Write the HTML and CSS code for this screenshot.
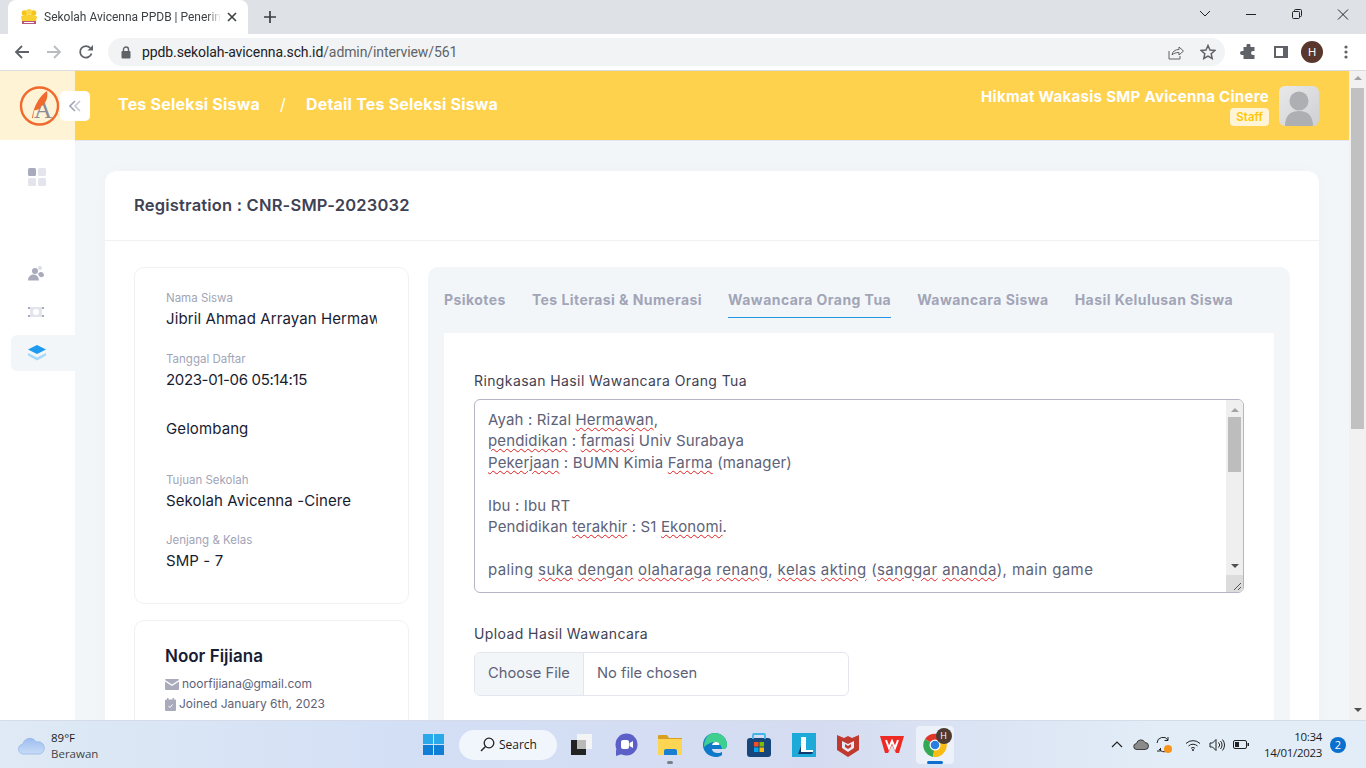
FILE: index.html
```html
<!DOCTYPE html>
<html lang="en">
<head>
  <meta charset="UTF-8">
  <title>Sekolah Avicenna PPDB</title>
  <link rel="stylesheet" href="styles.css">
</head>
<body>
  <!-- browser chrome -->
  <div class="tabstrip">
    <div class="tab">
      <svg class="favicon" width="18" height="18" viewBox="0 0 18 18"><circle cx="4.500" cy="5" r="2.800" fill="#f5c518"/><circle cx="13.500" cy="5" r="2.800" fill="#f5c518"/><circle cx="9" cy="4" r="3" fill="#fbd84a"/><path d="M1 9c1-2 5-2 8-2s7 0 8 2l-1 4H2z" fill="#f8d030"/><path d="M2 13h14v3H2z" fill="#b9557a"/><path d="M4 14h10v1H4z" fill="#fff"/></svg>
      <span class="tab-title">Sekolah Avicenna PPDB | Penerimaan Siswa</span>
      <svg class="tab-close" width="10" height="10" viewBox="0 0 10 10"><path d="M1 1l8 8M9 1l-8 8" stroke="#3c4043" stroke-width="1.600"/></svg>
    </div>
    <svg class="new-tab" width="14" height="14" viewBox="0 0 14 14"><path d="M7 1v12M1 7h12" stroke="#3c4043" stroke-width="1.700"/></svg>
    <div class="win-controls">
      <svg width="46" height="28" viewBox="0 0 46 28"><path d="M18 11l5 5 5-5" fill="none" stroke="#222" stroke-width="1"/></svg>
      <svg width="46" height="28" viewBox="0 0 46 28"><path d="M18 14.500h10" stroke="#222" stroke-width="1"/></svg>
      <svg width="46" height="28" viewBox="0 0 46 28"><path d="M20 11.500h-.5a1 1 0 0 0-1 1v5a1 1 0 0 0 1 1h5a1 1 0 0 0 1-1v-5a1 1 0 0 0-1-1H20zM20.500 11v-.5a1 1 0 0 1 1-1h5a1 1 0 0 1 1 1v5a1 1 0 0 1-1 1H26" fill="none" stroke="#222" stroke-width="1"/></svg>
      <svg width="46" height="28" viewBox="0 0 46 28"><path d="M18 9.500l10 10M28 9.500l-10 10" stroke="#222" stroke-width="1"/></svg>
    </div>
  </div>
  <div class="toolbar">
    <svg class="tool" width="16" height="16" viewBox="0 0 16 16"><path d="M15 8H2M8 2L2 8l6 6" fill="none" stroke="#5f6368" stroke-width="1.800"/></svg>
    <svg class="tool" width="16" height="16" viewBox="0 0 16 16"><path d="M1 8h13M8 2l6 6-6 6" fill="none" stroke="#babcbe" stroke-width="1.800"/></svg>
    <svg class="tool" width="16" height="16" viewBox="0 0 16 16"><path d="M13.500 9.500A5.800 5.800 0 1 1 12.300 4" fill="none" stroke="#5f6368" stroke-width="1.800"/><path d="M9.500 6.500H15V1z" fill="#5f6368"/></svg>
    <div class="omnibox">
      <svg width="10" height="13" viewBox="0 0 10 13"><path d="M2.500 5V3.500a2.500 2.500 0 0 1 5 0V5" fill="none" stroke="#5f6368" stroke-width="1.400"/><rect x="0.500" y="5" width="9" height="7.500" rx="1" fill="#5f6368"/></svg>
      <span class="url">ppdb.sekolah-avicenna.sch.id<span class="url-path">/admin/interview/561</span></span>
      <svg class="omni-share" width="16" height="16" viewBox="0 0 16 16"><path d="M1 7v8h11v-3" fill="none" stroke="#5f6368"/><path d="M4 11c.500-3.500 3-5.500 7-5.500V3l4.500 4-4.500 4V8.500c-3 0-5.500.800-7 2.500z" fill="none" stroke="#5f6368"/></svg>
      <svg class="omni-star" width="16" height="16" viewBox="0 0 16 16"><path d="M8 1.500l2 4.500 4.800.500-3.600 3.200 1 4.800L8 12.100l-4.200 2.400 1-4.800L1.200 6.500 6 6z" fill="none" stroke="#5f6368" stroke-width="1.500"/></svg>
    </div>
    <svg class="tool-puzzle" width="16" height="16" viewBox="0 0 16 16"><path d="M6 1.500a2 2 0 0 1 4 0V3h4v4h-1.500a2 2 0 0 0 0 4H14v4H3v-4H1.500a2 2 0 0 1 0-4H3V3h3z" fill="#5f6368" transform="translate(.5 0)"/></svg>
    <svg class="tool-panel" width="14" height="12" viewBox="0 0 14 12"><path d="M0 0h14v12H0zM2 2v8h7V2z" fill="#5f6368" fill-rule="evenodd"/></svg>
    <div class="profile">H</div>
    <svg class="tool-dots" width="4" height="14" viewBox="0 0 4 14"><circle cx="2" cy="2" r="1.600" fill="#5f6368"/><circle cx="2" cy="7" r="1.600" fill="#5f6368"/><circle cx="2" cy="12" r="1.600" fill="#5f6368"/></svg>
  </div>

  <!-- page -->
  <div class="viewport">
    <div class="app">
      <header class="topbar">
        <div class="brand">
          <svg width="42" height="42" viewBox="0 0 42 42">
            <circle cx="20.500" cy="21" r="18.500" fill="none" stroke="#ef6a2c" stroke-width="2.400"/>
            <text x="24" y="33" class="logo-a">A</text>
            <path d="M13 33C14 24 19 12 28 6c1.500 7-1.500 12-5 15l-2 .5 1 1c-2 1.500-3.500 2.500-7 3L14 33z" fill="#ef6a2c"/>
          </svg>
          <button class="collapse">
            <svg width="12" height="12" viewBox="0 0 12 12"><path d="M6 1L1 6l5 5" fill="none" stroke="#a1a5b7" stroke-width="1.600"/><path d="M11 1L6 6l5 5" fill="none" stroke="#c4c6d2" stroke-width="1.600"/></svg>
          </button>
        </div>
        <div class="crumbs">
          <span>Tes Seleksi Siswa</span>
          <span class="crumb-sep">/</span>
          <span>Detail Tes Seleksi Siswa</span>
        </div>
        <div class="user">
          <div class="user-name">Hikmat Wakasis SMP Avicenna Cinere</div>
          <div class="user-role">Staff</div>
        </div>
        <div class="avatar">
          <svg width="40" height="40" viewBox="0 0 40 40"><circle cx="20" cy="15" r="9.500" fill="#aeafb3"/><path d="M6 40c0-10 5-15 14-15s14 5 14 15z" fill="#aeafb3"/></svg>
        </div>
      </header>
      <div class="layout">
        <nav class="sidebar">
          <div class="nav-item nav-first">
            <svg width="18" height="18" viewBox="0 0 18 18"><rect width="8" height="8" rx="1.500" fill="#a9abbd"/><rect x="10" width="8" height="8" rx="1.500" fill="#e4e5ec"/><rect y="10" width="8" height="8" rx="1.500" fill="#e4e5ec"/><rect x="10" y="10" width="8" height="8" rx="1.500" fill="#e4e5ec"/></svg>
          </div>
          <div class="nav-item nav-users">
            <svg width="16" height="15" viewBox="0 0 16 15"><circle cx="7" cy="5" r="3" fill="#a9abbd"/><circle cx="12" cy="2" r="2" fill="#dcdde6"/><path d="M0 14.500c0-3.500 2.500-6 5.500-6 2.500 0 4 1.500 5 3.500l.5 2.500z" fill="#a9abbd"/><path d="M10 8c.8-1.500 2-2 3-2 1.500 0 3 1.500 3 3.500-1 2-3.500 2-4.500 1z" fill="#a9abbd"/></svg>
          </div>
          <div class="nav-item">
            <svg width="16" height="12" viewBox="0 0 16 12"><rect x="2" y="1" width="12" height="10" fill="#e4e5ec"/><circle cx="8" cy="6" r="3" fill="#fff"/><path d="M0 1h2v2H0zM14 1h2v2h-2zM0 9h2v2H0zM14 9h2v2h-2z" fill="#a9abbd"/></svg>
          </div>
          <div class="nav-item nav-active">
            <svg width="18" height="16" viewBox="0 0 18 16"><path d="M9 0l9 4.500L9 9 0 4.500z" fill="#1c9bf0"/><path d="M0 8l9 4.500L18 8v2.500L9 15.500 0 10.500z" fill="#a5d8fa"/></svg>
          </div>
        </nav>
        <main class="content">
          <section class="card">
            <div class="card-head">Registration : CNR-SMP-2023032</div>
            <div class="card-body">
              <aside class="side-col">
                <div class="info-card">
                  <div class="field"><div class="field-label">Nama Siswa</div><div class="field-value">Jibril Ahmad Arrayan Hermawan</div></div>
                  <div class="field"><div class="field-label">Tanggal Daftar</div><div class="field-value field-date">2023-01-06 05:14:15</div></div>
                  <div class="field field-plain"><div class="field-value">Gelombang</div></div>
                  <div class="field"><div class="field-label">Tujuan Sekolah</div><div class="field-value">Sekolah Avicenna -Cinere</div></div>
                  <div class="field"><div class="field-label">Jenjang &amp; Kelas</div><div class="field-value">SMP - 7</div></div>
                </div>
                <div class="parent-card">
                  <div class="parent-name">Noor Fijiana</div>
                  <div class="parent-line">
                    <svg width="14" height="11" viewBox="0 0 14 11"><path d="M0 1a1 1 0 0 1 1-1h12a1 1 0 0 1 1 1L7 5.500z" fill="#a9abbd"/><path d="M0 2.500l7 4.500 7-4.500V10a1 1 0 0 1-1 1H1a1 1 0 0 1-1-1z" fill="#a9abbd"/></svg>
                    noorfijiana@gmail.com
                  </div>
                  <div class="parent-line">
                    <svg width="11" height="13" viewBox="0 0 11 13"><path d="M1 1.500h9a1 1 0 0 1 1 1V12a1 1 0 0 1-1 1H1a1 1 0 0 1-1-1V2.500a1 1 0 0 1 1-1z" fill="#a9abbd"/><path d="M2 0h1.500v2.500H2zM7.500 0H9v2.500H7.500z" fill="#a9abbd"/><path d="M3.500 8l1.500 1.500 2.500-3" fill="none" stroke="#fff"/></svg>
                    Joined January 6th, 2023
                  </div>
                </div>
              </aside>
              <div class="tab-panel">
                <div class="tabs">
                  <span class="tab-link">Psikotes</span>
                  <span class="tab-link">Tes Literasi &amp; Numerasi</span>
                  <span class="tab-link tab-link-active">Wawancara Orang Tua</span>
                  <span class="tab-link">Wawancara Siswa</span>
                  <span class="tab-link">Hasil Kelulusan Siswa</span>
                </div>
                <div class="tab-body">
                  <label class="form-label">Ringkasan Hasil Wawancara Orang Tua</label>
                  <div class="textbox">
                    <div class="textbox-text">
                      <div>Ayah : Rizal <u>Hermawan</u>,</div>
                      <div><u>pendidikan</u> : <u>farmasi</u> Univ Surabaya</div>
                      <div><u>Pekerjaan</u> : BUMN Kimia <u>Farma</u> (manager)</div>
                      <div>&nbsp;</div>
                      <div>Ibu : Ibu RT</div>
                      <div>Pendidikan <u>terakhir</u> : S1 <u>Ekonomi</u>.</div>
                      <div>&nbsp;</div>
                      <div class="text-long">paling <u>suka</u> <u>dengan</u> <u>olaharaga</u> <u>renang</u>, <u>kelas</u> <u>akting</u> (<u>sanggar</u> <u>ananda</u>), main game</div>
                    </div>
                    <div class="mini-scroll">
                      <span class="arrow-up"></span>
                      <span class="mini-thumb"></span>
                      <span class="arrow-down"></span>
                      <span class="mini-corner">
                        <svg width="17" height="17" viewBox="0 0 17 17"><path d="M8 15l7-7M12 15l3-3" stroke="#555" stroke-width="1"/></svg>
                      </span>
                    </div>
                  </div>
                  <label class="form-label upload-label">Upload Hasil Wawancara</label>
                  <div class="file-input">
                    <span class="file-btn">Choose File</span>
                    <span class="file-name">No file chosen</span>
                  </div>
                </div>
              </div>
            </div>
          </section>
        </main>
      </div>
    </div>
    <div class="page-scroll">
      <span class="arrow-up"></span>
      <span class="page-thumb"></span>
      <span class="arrow-down"></span>
    </div>
  </div>

  <!-- windows taskbar -->
  <footer class="taskbar">
    <div class="weather">
      <svg width="28" height="20" viewBox="0 0 28 20"><defs><linearGradient id="cloudFill" x1="0" y1="0" x2="0" y2="1"><stop offset="0" stop-color="#9dbdf0"/><stop offset="1" stop-color="#c9dcf7"/></linearGradient></defs><path d="M6 19a5 5 0 0 1-1-10 7 7 0 0 1 13-2 6 6 0 0 1 4 12z" fill="url(#cloudFill)" stroke="#8fb2ea" stroke-width=".7"/></svg>
      <div class="weather-text">
        <div class="temp">89°F</div>
        <div class="cond">Berawan</div>
      </div>
    </div>
    <div class="task-icons">
      <div class="task-icon">
        <svg width="21" height="21" viewBox="0 0 21 21"><rect width="10" height="10" fill="#29a8ea"/><rect x="11" width="10" height="10" fill="#29a8ea"/><rect y="11" width="10" height="10" fill="#0f7fd6"/><rect x="11" y="11" width="10" height="10" fill="#0f7fd6"/></svg>
      </div>
      <div class="search-pill">
        <svg width="15" height="15" viewBox="0 0 15 15"><circle cx="9" cy="6" r="4.800" fill="none" stroke="#222" stroke-width="1.300"/><path d="M5.500 9.500L1 14" stroke="#222" stroke-width="1.500"/></svg>
        Search
      </div>
      <div class="task-icon">
        <svg width="22" height="22" viewBox="0 0 22 22"><rect x="0" y="6" width="15" height="15" fill="#222"/><rect x="6" y="0" width="15" height="15" fill="#f4f4f4"/><rect x="6" y="6" width="9" height="9" fill="#b9b9b9"/></svg>
      </div>
      <div class="task-icon">
        <svg width="24" height="24" viewBox="0 0 24 24"><circle cx="12.500" cy="11.500" r="11" fill="#5b5fc7"/><path d="M2 16v7l6-2z" fill="#5b5fc7"/><rect x="7" y="7" width="8" height="9" rx="2" fill="#fff"/><path d="M15.500 10l3.500-2v7l-3.500-2z" fill="#fff"/></svg>
      </div>
      <div class="task-icon task-running">
        <svg width="24" height="22" viewBox="0 0 24 22"><path d="M0 2a1 1 0 0 1 1-1h8l2 3h13v4H0z" fill="#d9a11f"/><path d="M0 5h24v16H0z" fill="#fcd653"/><path d="M8 15h9a2 2 0 0 1 2 2v4H6v-4a2 2 0 0 1 2-2z" fill="#1a7fd0"/></svg>
      </div>
      <div class="task-icon">
        <svg width="24" height="24" viewBox="0 0 24 24"><path d="M12 0a12 12 0 0 1 12 12c0 3-2 4-5 4H9c.5 3 3 4 6 4 2 0 3-.5 4-1v3c-2 1.500-4 2-6 2C6 24 0 19 0 12 0 5 5 0 12 0z" fill="#0f79c9"/><path d="M12 0a12 12 0 0 1 12 12c0 3-2 4-5 4-1-4-3-7-7-7-4 0-8 2-11 5C1 6 5 0 12 0z" fill="#3fcf8e"/><path d="M9 12c.5-2 2-3 4-3 2 0 3.500 1 3.500 3z" fill="#fff"/></svg>
      </div>
      <div class="task-icon">
        <svg width="24" height="24" viewBox="0 0 24 24"><rect y="5" width="24" height="19" rx="3" fill="#16467c"/><path d="M6 6V2a1 1 0 0 1 1-1h10a1 1 0 0 1 1 1v4" fill="none" stroke="#3fb6e8" stroke-width="1.800"/><rect x="7" y="9" width="4.500" height="4.500" fill="#f25022"/><rect x="12.500" y="9" width="4.500" height="4.500" fill="#7fba00"/><rect x="7" y="14.500" width="4.500" height="4.500" fill="#00a4ef"/><rect x="12.500" y="14.500" width="4.500" height="4.500" fill="#ffb900"/></svg>
      </div>
      <div class="task-icon">
        <svg width="24" height="24" viewBox="0 0 24 24"><rect width="24" height="24" fill="#1eaad8"/><path d="M6 21l3-2V4h5v13h7v2z" fill="#fff"/><path d="M6 21l3-8v6h12l-1 2z" fill="#12396e"/></svg>
      </div>
      <div class="task-icon">
        <svg width="22" height="24" viewBox="0 0 22 24"><path d="M0 2l7 3 4-2 4 2 7-3v15l-11 7L0 17z" fill="#c0392f"/><path d="M5 8l6 3 6-3v7l-6 4-6-4z" fill="#e7eaf4"/><path d="M8 11l3 2 3-2v3l-3 2-3-2z" fill="#c0392f"/></svg>
      </div>
      <div class="task-icon">
        <svg width="24" height="18" viewBox="0 0 24 18"><path d="M0 0h24l-5 17h-3l-4-8-4 8H5z" fill="#ee2a24"/><path d="M6 4l3 8 3-7 3 7 3-8" fill="none" stroke="#fff" stroke-width="2"/></svg>
      </div>
      <div class="task-icon task-chrome">
        <svg width="24" height="24" viewBox="0 0 24 24"><path d="M12 12L2 6a12 12 0 0 1 20 0z" fill="#e0352b"/><path d="M12 12L2 6a12 12 0 0 0 8 18z" fill="#34a853"/><path d="M12 12l10-6a12 12 0 0 1-12 18z" fill="#f9bc15"/><circle cx="12" cy="12" r="5.500" fill="#fff"/><circle cx="12" cy="12" r="4.300" fill="#2a7de1"/></svg>
        <span class="chrome-badge">H</span>
      </div>
    </div>
    <div class="tray">
      <svg class="tray-chevron" width="12" height="7" viewBox="0 0 12 7"><path d="M1 6l5-5 5 5" fill="none" stroke="#222" stroke-width="1.200"/></svg>
      <svg width="16" height="11" viewBox="0 0 16 11"><path d="M4 10.500a3 3 0 0 1-.5-6 4.500 4.500 0 0 1 8.500-1 3.500 3.500 0 0 1 0 7z" fill="#8a8a8a" stroke="#222" stroke-width=".8"/></svg>
      <svg class="tray-sync" width="18" height="18" viewBox="0 0 18 18"><path d="M1 7a6 6 0 0 1 11-3" fill="none" stroke="#222"/><path d="M12 1v3.500H8.500" fill="none" stroke="#222"/><path d="M11 15a6 6 0 0 1-8-2" fill="none" stroke="#222"/><path d="M1 15h3.500v-3" fill="none" stroke="#222"/><circle cx="12" cy="13" r="4" fill="#f7931a"/></svg>
      <svg class="tray-wifi" width="16" height="12" viewBox="0 0 16 12"><path d="M1 4.500a10 10 0 0 1 14 0M3.500 7a6.500 6.500 0 0 1 9 0M6 9.300a3 3 0 0 1 4 0" fill="none" stroke="#222" stroke-width="1"/><circle cx="8" cy="11" r="1" fill="#222"/></svg>
      <svg width="16" height="14" viewBox="0 0 16 14"><path d="M1 5h2.500L7 1.500v11L3.500 9H1z" fill="none" stroke="#222"/><path d="M9.500 4.500a3.500 3.500 0 0 1 0 5M11.500 3a6 6 0 0 1 0 8M13.500 1.500a8.500 8.500 0 0 1 0 11" fill="none" stroke="#222"/></svg>
      <svg width="16" height="9" viewBox="0 0 16 9"><rect x=".5" y=".5" width="13" height="8" rx="1.500" fill="none" stroke="#222"/><rect x="2" y="2" width="4" height="5" fill="#222"/><rect x="14.500" y="3" width="1.500" height="3" fill="#222"/></svg>
      <div class="clock">
        <div>10:34</div>
        <div>14/01/2023</div>
      </div>
      <div class="notif">2</div>
    </div>
  </footer>
</body>
</html>
```
FILE: styles.css
```css
html, body {
  margin: 0;
  height: 768px;
  overflow: hidden;
}
body {
  font-family: "Inter", "Noto Sans", sans-serif;
  color: #3f4254;
  background: #fff;
}
svg {
  display: block;
  flex: none;
}

/* browser chrome */
.tabstrip {
  height: 34px;
  background: #dee1e6;
  display: flex;
  align-items: center;
  padding-left: 8px;
}
.tab {
  width: 240px;
  height: 34px;
  box-sizing: border-box;
  background: #fff;
  border-radius: 8px 8px 0 0;
  display: flex;
  align-items: center;
  padding: 0 11px 0 12px;
  gap: 6px;
}
.tab-title {
  flex: 1;
  min-width: 0;
  overflow: hidden;
  white-space: nowrap;
  font-family: "Roboto", sans-serif;
  font-size: 12px;
  color: #3c4043;
  -webkit-mask-image: linear-gradient(90deg, #000 92%, transparent);
  mask-image: linear-gradient(90deg, #000 92%, transparent);
}
.new-tab {
  margin-left: 15px;
}
.win-controls {
  margin-left: auto;
  display: flex;
  margin-top: -6px;
}
.toolbar {
  height: 37px;
  box-sizing: border-box;
  display: flex;
  align-items: center;
  padding-left: 14px;
  border-bottom: 1px solid #dadce0;
}
.tool {
  margin-right: 16px;
}
.omnibox {
  width: 1117px;
  height: 28px;
  margin-left: -2px;
  box-sizing: border-box;
  background: #f1f3f4;
  border-radius: 14px;
  display: flex;
  align-items: center;
  padding-left: 13px;
}
.url {
  margin-left: 11px;
  font-family: "Roboto", sans-serif;
  font-size: 14px;
  letter-spacing: -0.1px;
  color: #202124;
}
.url-path {
  color: #5f6368;
}
.omni-share {
  margin-left: auto;
}
.omni-star {
  margin: 0 9px 0 16px;
}
.tool-puzzle {
  margin-left: 15px;
}
.tool-panel {
  margin-left: 18px;
}
.profile {
  width: 22px;
  height: 22px;
  margin-left: 13px;
  border-radius: 50%;
  background: #5a372d;
  color: #fff;
  font-size: 11px;
  line-height: 22px;
  text-align: center;
}
.tool-dots {
  margin-left: 21px;
}

/* page */
.viewport {
  height: 649px;
  display: flex;
  overflow: hidden;
}
.app {
  flex: 1;
  min-width: 0;
  display: flex;
  flex-direction: column;
  background: #f3f6f9;
}
.page-scroll {
  width: 17px;
  flex: none;
  background: #f1f1f1;
  display: flex;
  flex-direction: column;
  align-items: center;
}
.page-thumb {
  width: 13px;
  height: 341px;
  background: #c1c1c1;
  margin-top: 8px;
}
.page-scroll .arrow-up {
  margin-top: 5px;
}
.page-scroll .arrow-down {
  margin-top: auto;
  margin-bottom: 8px;
}
.arrow-up, .arrow-down {
  width: 0;
  height: 0;
  border-left: 4px solid transparent;
  border-right: 4px solid transparent;
}
.arrow-up {
  border-bottom: 4px solid #a3a3a3;
}
.arrow-down {
  border-top: 4px solid #505050;
}

.topbar {
  height: 69px;
  flex: none;
  background: #ffd24d;
  display: flex;
  align-items: center;
  padding-right: 30px;
  color: #fff;
  box-shadow: 0 1px 0 #e4e6ef;
}
.brand {
  width: 75px;
  height: 69px;
  flex: none;
  background: #fff3d6;
  position: relative;
  display: flex;
  align-items: center;
  padding-left: 19px;
  box-sizing: border-box;
}
.logo-a {
  font-family: "Liberation Serif", serif;
  font-size: 25px;
  fill: #8a8d99;
  text-anchor: middle;
}
.collapse {
  position: absolute;
  left: 60px;
  top: 20px;
  width: 30px;
  height: 30px;
  padding: 0;
  border: 0;
  border-radius: 5px;
  background: #fff;
  display: flex;
  align-items: center;
  justify-content: center;
}
.crumbs {
  margin-left: 43px;
  margin-top: -3px;
  font-size: 16px;
  font-weight: 700;
  letter-spacing: 0.2px;
  display: flex;
  gap: 20px;
}
.crumb-sep {
  font-weight: 400;
}
.user {
  margin-left: auto;
  margin-top: 2px;
  text-align: right;
}
.user-name {
  font-size: 15px;
  font-weight: 700;
  letter-spacing: 0.3px;
  line-height: 20px;
}
.user-role {
  display: inline-block;
  vertical-align: top;
  margin-top: 1px;
  padding: 0 6px;
  background: #fff5d6;
  color: #ffc700;
  font-size: 11.500px;
  font-weight: 600;
  line-height: 18px;
  border-radius: 4px;
}
.avatar {
  width: 40px;
  height: 40px;
  margin-left: 10px;
  margin-top: 1px;
  border-radius: 6px;
  overflow: hidden;
  background: linear-gradient(135deg, #e9e9eb, #cfd0d3);
}

.layout {
  flex: 1;
  display: flex;
  min-height: 0;
}
.sidebar {
  width: 75px;
  flex: none;
  background: #fff;
  box-sizing: border-box;
  padding: 19px 0 0 11px;
  display: flex;
  flex-direction: column;
}
.nav-item {
  height: 36px;
  display: flex;
  align-items: center;
  padding-left: 17px;
  margin-top: 3px;
  border-radius: 6px 0 0 6px;
}
.nav-first {
  margin-top: 0;
}
.nav-users {
  margin-top: 60px;
}
.nav-active {
  margin-top: 5px;
  background: #f3f6f9;
}
.content {
  flex: 1;
  min-width: 0;
  padding: 31px 30px 0 30px;
}
.card {
  background: #fff;
  border-radius: 12px;
  box-shadow: 0 0 20px rgba(76, 87, 125, 0.02);
}
.card-head {
  height: 70px;
  box-sizing: border-box;
  padding: 0 29px 2px;
  border-bottom: 1px solid #eff2f5;
  display: flex;
  align-items: center;
  font-size: 16.500px;
  font-weight: 600;
  letter-spacing: 0.2px;
}
.card-body {
  display: flex;
  gap: 19px;
  padding: 26px 29px 0;
}
.side-col {
  width: 275px;
  flex: none;
}
.info-card, .parent-card {
  box-sizing: border-box;
  border: 1px solid #eff2f5;
  border-radius: 10px;
  padding: 24px 31px 0;
}
.info-card {
  height: 337px;
}
.field {
  height: 60.500px;
  box-sizing: border-box;
}
.field-plain {
  padding-top: 6px;
}
.field-label {
  font-size: 11.500px;
  line-height: 13px;
  margin-bottom: 4px;
  color: #a1a5b7;
}
.field-value {
  font-size: 15px;
  line-height: 20px;
  letter-spacing: 0.1px;
  color: #181c32;
  white-space: nowrap;
  overflow: hidden;
}
.field-date {
  letter-spacing: -0.35px;
}
.parent-card {
  margin-top: 16px;
  height: 200px;
  padding-left: 30px;
}
.parent-name {
  font-size: 17px;
  font-weight: 600;
  line-height: 22px;
  color: #181c32;
}
.parent-line {
  display: flex;
  align-items: center;
  gap: 3px;
  font-size: 12px;
  line-height: 20px;
  color: #5e6278;
}
.parent-name + .parent-line {
  margin-top: 7px;
}
.tab-panel {
  flex: 1;
  min-width: 0;
  background: #f3f6f9;
  border-radius: 10px;
  padding: 0 16px;
  height: 500px;
}
.tabs {
  display: flex;
  gap: 26px;
  height: 66px;
  box-sizing: border-box;
  padding-top: 23px;
}
.tab-link {
  font-size: 14px;
  font-weight: 700;
  letter-spacing: 0.45px;
  line-height: 20px;
  color: #a1a5b7;
  height: 28px;
  box-sizing: border-box;
}
.tab-link-active {
  border-bottom: 1px solid #2196e3;
}
.tab-body {
  background: #fff;
  padding: 38px 30px 0;
  height: 420px;
}
.form-label {
  display: block;
  font-size: 14px;
  letter-spacing: 0.4px;
  line-height: 20px;
  color: #3f4254;
  margin-bottom: 8px;
}
.textbox {
  height: 194px;
  box-sizing: border-box;
  border: 1px solid #b5b5c3;
  border-radius: 6px;
  display: flex;
  overflow: hidden;
}
.textbox-text {
  flex: 1;
  min-width: 0;
  padding: 9px 13px;
  font-size: 15px;
  letter-spacing: 0.15px;
  line-height: 21.400px;
  color: #5e6278;
  white-space: nowrap;
  overflow: hidden;
}
.text-long {
  letter-spacing: 0.4px;
}
.textbox-text u {
  text-decoration: underline wavy #e02020 1px;
  text-underline-offset: 2px;
}
.mini-scroll {
  width: 17px;
  flex: none;
  background: #efefef;
  display: flex;
  flex-direction: column;
  align-items: center;
}
.mini-scroll .arrow-up {
  margin-top: 8px;
}
.mini-thumb {
  width: 13px;
  height: 55px;
  margin-top: 5px;
  background: #bdbdbd;
}
.mini-scroll .arrow-down {
  margin-top: auto;
  margin-bottom: 7px;
}
.mini-corner {
  width: 17px;
  height: 17px;
  background: #dcdcdc;
}
.upload-label {
  margin-top: 31px;
}
.file-input {
  width: 375px;
  height: 44px;
  box-sizing: border-box;
  border: 1px solid #e4e6ef;
  border-radius: 6px;
  display: flex;
  align-items: center;
  overflow: hidden;
  font-size: 14.700px;
  line-height: 20px;
  color: #5e6278;
}
.file-btn {
  align-self: stretch;
  display: flex;
  align-items: center;
  padding: 0 13px 2px;
  width: 109px;
  box-sizing: border-box;
  background: #f3f6f9;
  border-right: 1px solid #e4e6ef;
  white-space: nowrap;
}
.file-name {
  margin: 0 0 2px 13px;
}

/* windows taskbar */
.taskbar {
  height: 48px;
  position: relative;
  box-sizing: border-box;
  border-top: 1px solid #d5dbe8;
  background: linear-gradient(90deg, #dfeaf5 0%, #d3dff5 30%, #d5dcf1 60%, #e2edf7 85%, #e3edf7 100%);
  display: flex;
  align-items: center;
  font-family: "Open Sans", sans-serif;
  color: #1b1b1b;
}
.weather {
  width: 411px;
  flex: none;
  box-sizing: border-box;
  padding-left: 18px;
  display: flex;
  align-items: center;
  gap: 5px;
}
.weather-text {
  margin-top: 2px;
}
.temp {
  font-size: 11.500px;
  line-height: 16px;
}
.cond {
  font-size: 11.500px;
  line-height: 16px;
  color: #444;
}
.task-icons {
  display: flex;
  align-items: center;
}
.task-icon {
  width: 44.400px;
  height: 38px;
  flex: none;
  display: flex;
  align-items: center;
  justify-content: center;
  position: relative;
}
.task-running::after {
  content: "";
  position: absolute;
  bottom: 0;
  left: 19px;
  width: 6px;
  height: 3px;
  border-radius: 2px;
  background: #7a7f88;
}
.task-chrome {
  width: 38px;
  margin-left: 1px;
  background: rgba(255, 255, 255, 0.5);
  border-radius: 4px;
}
.task-chrome::after {
  content: "";
  position: absolute;
  bottom: 0;
  left: 11px;
  width: 16px;
  height: 3px;
  border-radius: 2px;
  background: #0a6fce;
}
.chrome-badge {
  position: absolute;
  top: 2px;
  right: 2px;
  width: 16px;
  height: 16px;
  border-radius: 50%;
  background: #4d3a31;
  color: #fff;
  font-size: 9px;
  line-height: 16px;
  text-align: center;
}
.search-pill {
  width: 98px;
  height: 30px;
  margin: 0 2px 0 4px;
  border-radius: 15px;
  background: #f1f5fc;
  display: flex;
  align-items: center;
  justify-content: center;
  gap: 4px;
  font-size: 12px;
}
.tray {
  margin-left: auto;
  display: flex;
  align-items: center;
  gap: 8px;
  padding-right: 20px;
}
.tray-chevron {
  margin-right: 2px;
}
.tray-sync {
  margin-left: -1px;
}
.tray-wifi {
  margin-left: 3px;
}
.clock {
  font-size: 11.500px;
  letter-spacing: -0.3px;
  line-height: 16px;
  text-align: right;
  margin-left: 7px;
}
.notif {
  width: 16px;
  height: 16px;
  border-radius: 50%;
  background: #0a6fce;
  color: #fff;
  font-size: 11px;
  line-height: 16px;
  text-align: center;
}
```
